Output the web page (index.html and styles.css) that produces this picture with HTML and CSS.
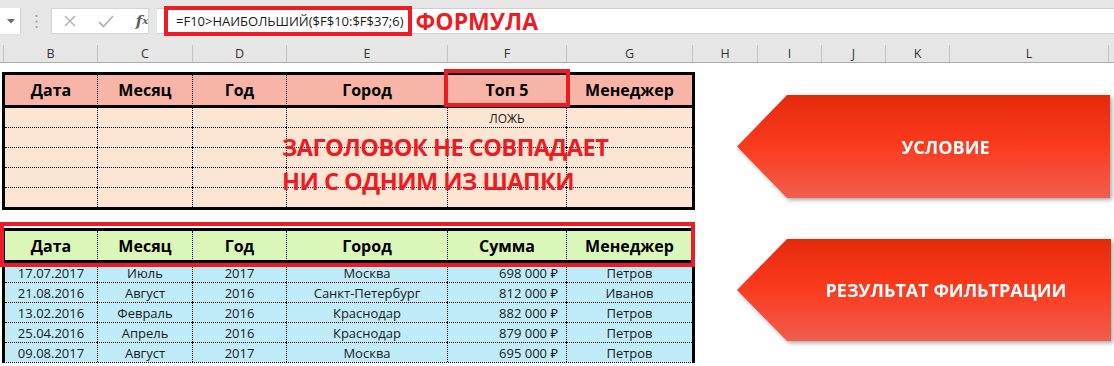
FILE: index.html
```html
<!DOCTYPE html>
<html lang="ru">
<head>
<meta charset="utf-8">
<title>Расширенный фильтр</title>
<link rel="stylesheet" href="styles.css">
</head>
<body>
<div class="topbar">
  <div class="fbar">
    <div class="namebox">
      <svg width="8" height="5" viewBox="0 0 8 5"><path d="M0 0H8L4 4.5Z" fill="#6b6b6b"/></svg>
    </div>
    <div class="grip">
      <svg width="3" height="13" viewBox="0 0 3 13"><rect x="0.5" y="0" width="2" height="2" fill="#a8a8a8"/><rect x="0.5" y="5.5" width="2" height="2" fill="#a8a8a8"/><rect x="0.5" y="11" width="2" height="2" fill="#a8a8a8"/></svg>
    </div>
    <div class="fxbox">
      <span class="btn btn-x"><svg width="12" height="12" viewBox="0 0 12 12"><path d="M1 1L11 11M11 1L1 11" stroke="#b5b5b5" stroke-width="1.5"/></svg></span>
      <span class="btn btn-ok"><svg width="16" height="13" viewBox="0 0 16 13"><path d="M1 7L5.5 11.5L15 1" stroke="#b5b5b5" stroke-width="1.8" fill="none"/></svg></span>
      <span class="btn btn-fx fx">f<sub>x</sub></span>
    </div>
    <div class="finput">
      <span class="formula">=F10&gt;НАИБОЛЬШИЙ($F$10:$F$37;6)</span>
      <span class="flabel">ФОРМУЛА</span>
    </div>
  </div>
  <div class="colheads">
    <div class="ch w-a"></div>
    <div class="ch w-b">B</div>
    <div class="ch w-c">C</div>
    <div class="ch w-d">D</div>
    <div class="ch w-e">E</div>
    <div class="ch w-f">F</div>
    <div class="ch w-g">G</div>
    <div class="ch w-h">H</div>
    <div class="ch w-i">I</div>
    <div class="ch w-j">J</div>
    <div class="ch w-k">K</div>
    <div class="ch w-l">L</div>
  </div>
</div>

<div class="sheet">
  <div class="tables">
    <div class="tbl tbl-cond">
      <div class="h">Дата</div><div class="h">Месяц</div><div class="h">Год</div><div class="h">Город</div><div class="h hl">Топ 5</div><div class="h">Менеджер</div>
      <div class="r1"></div><div class="r1"></div><div class="r1"></div><div class="r1"></div><div class="r1 small">ЛОЖЬ</div><div class="r1"></div>
      <div></div><div></div><div></div><div></div><div></div><div></div>
      <div></div><div></div><div></div><div></div><div></div><div></div>
      <div></div><div></div><div></div><div></div><div></div><div></div>
      <div></div><div></div><div></div><div></div><div></div><div></div>
      <p class="warn">ЗАГОЛОВОК НЕ СОВПАДАЕТ<br>НИ С ОДНИМ ИЗ ШАПКИ</p>
    </div>

    <div class="tbl tbl-res">
      <div class="h">Дата</div><div class="h">Месяц</div><div class="h">Год</div><div class="h">Город</div><div class="h">Сумма</div><div class="h">Менеджер</div>
      <div class="r1">17.07.2017</div><div class="r1">Июль</div><div class="r1">2017</div><div class="r1">Москва</div><div class="r1 num">698 000 ₽</div><div class="r1">Петров</div>
      <div>21.08.2016</div><div>Август</div><div>2016</div><div>Санкт-Петербург</div><div class="num">812 000 ₽</div><div>Иванов</div>
      <div>13.02.2016</div><div>Февраль</div><div>2016</div><div>Краснодар</div><div class="num">882 000 ₽</div><div>Петров</div>
      <div>25.04.2016</div><div>Апрель</div><div>2016</div><div>Краснодар</div><div class="num">879 000 ₽</div><div>Петров</div>
      <div>09.08.2017</div><div>Август</div><div>2017</div><div>Москва</div><div class="num">695 000 ₽</div><div>Петров</div>
      <span class="hlbox"></span>
    </div>
  </div>

  <div class="shapes">
    <div class="arrow"><div class="arrow-body">УСЛОВИЕ</div></div>
    <div class="arrow arrow-2"><div class="arrow-body">РЕЗУЛЬТАТ ФИЛЬТРАЦИИ</div></div>
  </div>
</div>
</body>
</html>
```

FILE: styles.css
```css
html, body {
  margin: 0;
  padding: 0;
  background: #ffffff;
}
body {
  width: 1114px;
  height: 366px;
  overflow: hidden;
  font-family: "Open Sans", "Noto Sans", sans-serif;
  color: #111;
}

/* ---------- top bar ---------- */
.topbar {
  background: #e6e6e6;
  padding-top: 8px;
}
.fbar {
  display: flex;
  height: 26px;
  align-items: stretch;
}
.namebox {
  width: 21px;
  background: #fff;
  border-right: 1px solid #d0d0d0;
  box-sizing: border-box;
  display: flex;
  align-items: center;
  justify-content: center;
  padding-left: 2px;
}
.grip {
  width: 30px;
  display: flex;
  align-items: center;
  justify-content: center;
}
.fxbox {
  width: 98px;
  background: #fff;
  border: 1px solid #d4d4d4;
  box-sizing: border-box;
  display: flex;
  align-items: center;
}
.btn {
  flex: none;
  width: 16px;
  display: flex;
  align-items: center;
  justify-content: center;
}
.btn-x { margin-left: 10px; }
.btn-ok { margin-left: 20px; }
.btn-fx { margin-left: 20px; }
.fx {
  font-family: "DejaVu Serif", "Liberation Serif", serif;
  font-style: italic;
  font-weight: bold;
  font-size: 15px;
  color: #5f5f5f;
  line-height: 1;
}
.fx sub {
  font-size: 10px;
  vertical-align: -1px;
}
.finput {
  flex: 1;
  margin-left: 8px;
  background: #fff;
  border-top: 1px solid #cfcfcf;
  border-bottom: 1px solid #cfcfcf;
  display: flex;
  align-items: center;
  padding-left: 7px;
}
.formula {
  flex: none;
  height: 30px;
  box-sizing: border-box;
  border: 4px solid #ed1c24;
  display: flex;
  align-items: center;
  padding: 0 4px 0 8px;
  font-size: 13px;
  color: #1a1a1a;
  white-space: nowrap;
}
.flabel {
  margin-left: 4px;
  font-weight: 700;
  font-size: 23px;
  color: #ed1c24;
  line-height: 1;
}

.colheads {
  display: flex;
  margin-top: 8px;
  height: 21px;
  box-sizing: border-box;
  border-bottom: 1px solid #a9a9a9;
  padding-top: 3px;
}
.ch {
  height: 17px;
  box-sizing: border-box;
  border-right: 1px solid #c3c3c3;
  font-size: 12.5px;
  color: #333;
  display: flex;
  align-items: center;
  justify-content: center;
  flex: none;
}
.w-a { width: 4px; }
.w-b { width: 94px; }
.w-c { width: 95px; }
.w-d { width: 94px; }
.w-e { width: 161px; }
.w-f { width: 119px; }
.w-g { width: 126px; }
.w-h { width: 65px; }
.w-i { width: 64px; }
.w-j { width: 64px; }
.w-k { width: 64px; }
.w-l { width: 159px; }

/* ---------- sheet ---------- */
.sheet {
  display: flex;
  align-items: flex-start;
}
.tables {
  padding: 9px 0 0 2px;
  display: flex;
  flex-direction: column;
  gap: 18px;
}
.tbl {
  display: grid;
  grid-template-columns: 92px 95px 94px 161px 119px 126px;
  border: 3px solid #000;
  position: relative;
  width: max-content;
}
.tbl > div {
  height: 20px;
  box-sizing: border-box;
  border-left: 1px dotted #000;
  border-top: 1px dotted #000;
  display: flex;
  align-items: center;
  justify-content: center;
  font-size: 13px;
  color: #1a1a1a;
  white-space: nowrap;
}
.tbl > div:nth-child(6n+1) {
  border-left: none;
}
.tbl > div.h {
  height: 33px;
  border-top: none;
  border-bottom: 3px solid #000;
  font-weight: 700;
  font-size: 16px;
  color: #000;
}
.tbl > div.r1 {
  height: 19px;
  border-top: none;
}
.tbl > div.num {
  justify-content: flex-end;
  padding-right: 8px;
}
.tbl > div.small {
  font-size: 12px;
  padding-top: 1px;
}

.tbl-cond > div { background: #fde5d3; }
.tbl-cond > div.h { background: #f8b4a6; }
.tbl-res { border-bottom: 1px dotted #000; }
.tbl-res > div { background: #bfeaf8; }
.tbl-res > div.h { height: 32px; background: #daf6b9; }

.hl { position: relative; }
.hl::after {
  content: "";
  position: absolute;
  top: -6px;
  left: -4px;
  right: -4px;
  bottom: -2px;
  border: 4px solid #ed1c24;
}
.hlbox {
  position: absolute;
  top: -9px;
  left: -5px;
  right: -3px;
  height: 45px;
  box-sizing: border-box;
  border: 4px solid #ed1c24;
}
.warn {
  position: absolute;
  margin: 0;
  left: 277px;
  top: 55px;
  line-height: 34px;
  font-weight: 700;
  font-size: 23.5px;
  letter-spacing: -0.5px;
  color: #ed1c24;
  white-space: nowrap;
}

/* ---------- shapes ---------- */
.shapes {
  margin-left: 42px;
  padding-top: 32px;
  display: flex;
  flex-direction: column;
  gap: 41px;
}
.arrow {
  width: 373px;
  height: 103px;
  filter: drop-shadow(2px 2px 2px rgba(0, 0, 0, 0.35));
}
.arrow-2 {
  width: 374px;
  height: 102px;
}
.arrow-body {
  width: 100%;
  height: 100%;
  clip-path: polygon(50px 0, 100% 0, 100% 100%, 50px 100%, 0 50%);
  background: linear-gradient(180deg, #e52a0c 0%, #fb3a1d 48%, #f25d4e 100%);
  display: flex;
  align-items: center;
  justify-content: center;
  padding-left: 44px;
  box-sizing: border-box;
  color: #fff;
  font-weight: 700;
  font-size: 18px;
}
```
